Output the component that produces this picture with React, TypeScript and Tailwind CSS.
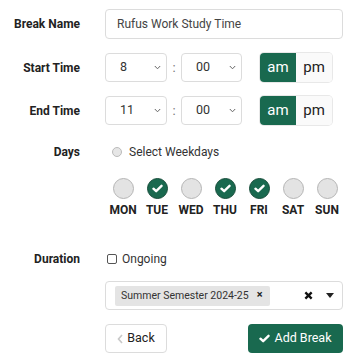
import React from "react";

function Chevron() {
  return (
    <svg width="7" height="5" viewBox="0 0 7 5" className="text-[#666]">
      <path d="M0.8 1 L3.5 3.8 L6.2 1" fill="none" stroke="currentColor" strokeWidth="1" />
    </svg>
  );
}

function TimeSelect({ value, w }: { value: string; w: string }) {
  return (
    <div className={`flex h-[29px] items-center rounded-[4px] border border-[#dcdcdc] bg-white ${w}`}>
      <span className="flex-1 pl-[14px] text-left text-[12.5px] text-[#333]">{value}</span>
      <span className="pr-[5px]">
        <Chevron />
      </span>
    </div>
  );
}

function AmPm() {
  return (
    <div className="ml-[18px] flex h-[29px] overflow-hidden rounded-[4px] shadow-[0_0_0_1px_#e8e8e8]">
      <div className="flex w-[36px] items-center justify-center bg-[#19694f] text-[15px] text-white">am</div>
      <div className="flex w-[36px] items-center justify-center bg-[#fafafa] text-[15px] text-[#222]">pm</div>
    </div>
  );
}

function Label({ children }: { children: React.ReactNode }) {
  return <div className="w-[80px] text-right text-[12px] font-bold text-[#222]">{children}</div>;
}

function TimeRow({ label, hour }: { label: string; hour: string }) {
  return (
    <div className="flex h-[29px] items-center">
      <Label>{label}</Label>
      <div className="ml-[25px] flex items-center">
        <TimeSelect value={hour} w="w-[62px]" />
        <span className="w-[14px] text-center text-[13px] text-[#777]">:</span>
        <TimeSelect value="00" w="w-[61px]" />
        <AmPm />
      </div>
    </div>
  );
}

function Check() {
  return (
    <svg width="11" height="9" viewBox="0 0 12 10">
      <path d="M1.5 5.2 L4.5 8 L10.5 2" fill="none" stroke="white" strokeWidth="2.6" strokeLinecap="round" strokeLinejoin="round" />
    </svg>
  );
}

function Day({ label, checked }: { label: string; checked: boolean }) {
  return (
    <div className="flex w-[34px] flex-col items-center">
      {checked ? (
        <div className="flex h-[21px] w-[21px] items-center justify-center rounded-full border border-[#174d3a] bg-[#19694f]">
          <Check />
        </div>
      ) : (
        <div className="h-[21px] w-[21px] rounded-full border border-[#b5b5b5] bg-[#e3e3e3]" />
      )}
      <div className="mt-[5px] text-[12px] font-bold leading-none text-[#222]">{label}</div>
    </div>
  );
}

export default function App() {
  const days: [string, boolean][] = [
    ["MON", false],
    ["TUE", true],
    ["WED", false],
    ["THU", true],
    ["FRI", true],
    ["SAT", false],
    ["SUN", false],
  ];
  return (
    <div className="h-[357px] w-[347px] bg-white" style={{ fontFamily: "Roboto, 'Liberation Sans', sans-serif" }}>
      <div className="pt-[9px]">
        <div className="flex h-[30px] items-center">
          <Label>Break Name</Label>
          <div className="ml-[25px] flex h-[30px] w-[238px] items-center rounded-[4px] border border-[#dcdcdc] pl-[11px] text-[12px] text-[#444]">
            Rufus Work Study Time
          </div>
        </div>
        <div className="mt-[14px]">
          <TimeRow label="Start Time" hour="8" />
        </div>
        <div className="mt-[14px]">
          <TimeRow label="End Time" hour="11" />
        </div>
        <div className="mt-[17px] flex h-[20px] items-center">
          <Label>Days</Label>
          <div className="ml-[32px] flex items-center">
            <span className="h-[10px] w-[10px] rounded-full border border-[#bbb] bg-[#e6e6e6]" />
            <span className="ml-[7px] text-[12px] text-[#333]">Select Weekdays</span>
          </div>
        </div>
        <div className="mt-[16px] ml-[106px] flex">
          {days.map(([d, c]) => (
            <Day key={d} label={d} checked={c} />
          ))}
        </div>
        <div className="mt-[33px] flex h-[20px] items-center">
          <Label>Duration</Label>
          <div className="ml-[27px] flex items-center">
            <span className="h-[10px] w-[10px] rounded-[2px] border border-[#555] bg-white" />
            <span className="ml-[5px] text-[12px] text-[#333]">Ongoing</span>
          </div>
        </div>
        <div className="mt-[12px] ml-[105px] flex h-[29px] w-[238px] items-center rounded-[4px] border border-[#dcdcdc] pl-[9px] pr-[8px]">
          <div className="flex h-[20px] items-center rounded-[2px] bg-[#e4e4e4] pl-[6px] pr-[8px] text-[10.5px] text-[#333]">
            Summer Semester 2024-25
            <span className="ml-[8px] text-[11px] font-bold text-[#222]">×</span>
          </div>
          <div className="flex-1" />
          <svg width="9" height="9" viewBox="0 0 10 10">
            <path d="M1.5 1.5 L8.5 8.5 M8.5 1.5 L1.5 8.5" stroke="#111" strokeWidth="2.6" />
          </svg>
          <svg className="ml-[13px]" width="8" height="5" viewBox="0 0 8 5">
            <path d="M0 0 L8 0 L4 5 Z" fill="#222" />
          </svg>
        </div>
        <div className="mt-[14px] ml-[105px] flex w-[238px] items-center justify-between">
          <div className="flex h-[29px] w-[62px] items-center justify-center rounded-[4px] border border-[#dcdcdc] bg-white text-[12.5px] text-[#222]">
            <svg width="6" height="10" viewBox="0 0 6 10" className="mr-[4px]">
              <path d="M5 1 L1.5 5 L5 9" fill="none" stroke="#c8c8c8" strokeWidth="1.6" />
            </svg>
            Back
          </div>
          <div className="flex h-[29px] w-[95px] items-center justify-center rounded-[4px] bg-[#19694f] text-[12.5px] text-white">
            <span className="mr-[4px]">
              <Check />
            </span>
            Add Break
          </div>
        </div>
      </div>
    </div>
  );
}
